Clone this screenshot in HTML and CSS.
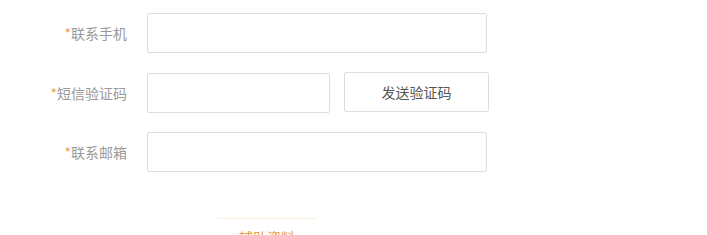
FILE: index.html
```html
<!DOCTYPE html>
<html>
<head>
<meta charset="utf-8">
<link rel="stylesheet" href="styles.css">
</head>
<body>
<div class="form">
  <div class="row">
    <label class="label"><span class="req">*</span>联系手机</label>
    <input class="input wide" type="text">
  </div>
  <div class="row">
    <label class="label"><span class="req">*</span>短信验证码</label>
    <input class="input short" type="text">
    <button class="btn">发送验证码</button>
  </div>
  <div class="row row-last">
    <label class="label"><span class="req">*</span>联系邮箱</label>
    <input class="input wide" type="text">
  </div>
</div>
<div class="tabs">
  <div class="tab">辅助资料</div>
</div>
</body>
</html>
```
FILE: styles.css
```css
body {
  margin: 0;
  background: #fff;
  font-family: "Noto Sans CJK SC", "Liberation Sans", sans-serif;
}
.form {
  padding-top: 13px;
  display: flex;
  flex-direction: column;
  gap: 20px;
}
.row {
  display: flex;
  align-items: center;
  height: 40px;
}
.row-last {
  margin-top: -1px;
}
.label {
  width: 127px;
  text-align: right;
  font-size: 14px;
  color: #999;
  margin-right: 20px;
  line-height: 40px;
}
.req {
  color: #f0a050;
}
.input {
  box-sizing: border-box;
  height: 40px;
  border: 1px solid #ddd;
  border-radius: 2px;
  outline: none;
  padding: 0 10px;
}
.wide { width: 340px; }
.short { width: 183px; }
.btn {
  box-sizing: border-box;
  margin-left: 14px;
  margin-top: -2px;
  width: 145px;
  height: 40px;
  background: #fff;
  border: 1px solid #ddd;
  border-radius: 2px;
  font-family: "Noto Sans CJK SC", sans-serif;
  font-size: 14px;
  color: #555;
}
.tabs {
  margin-top: 46px;
  padding-left: 218px;
}
.tab {
  width: 98px;
  border-top: 1px solid #fbeedd;
  text-align: center;
  font-size: 14px;
  color: #e8a040;
  padding-top: 8px;
}
```
